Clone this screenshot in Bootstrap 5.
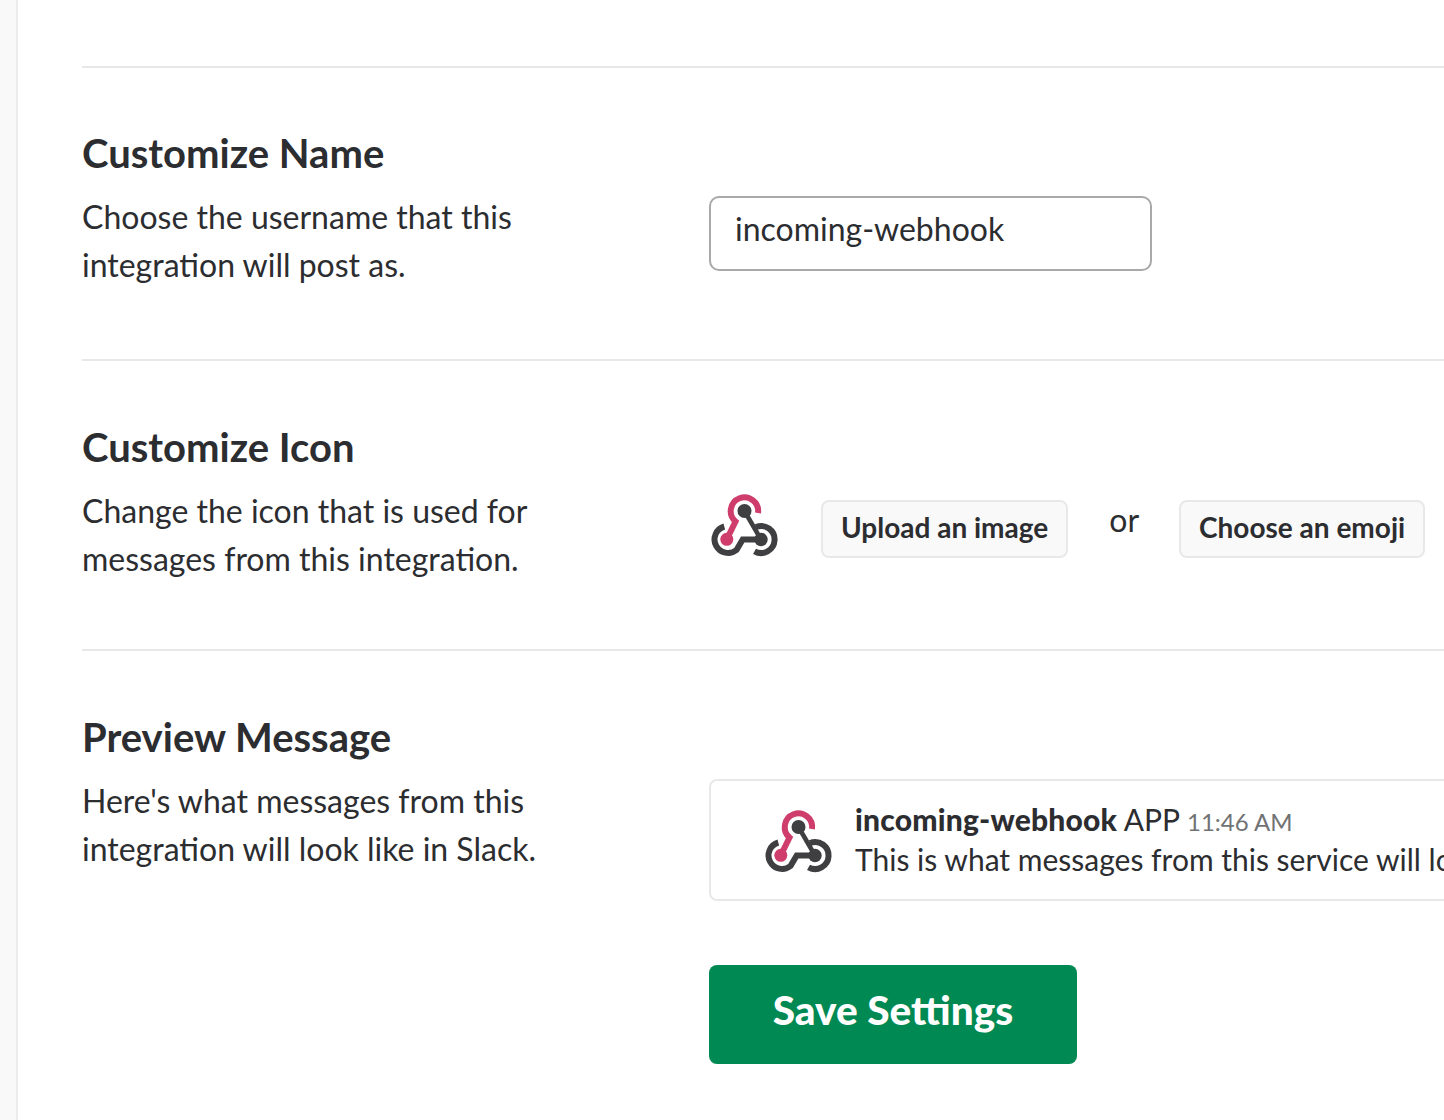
<!DOCTYPE html>
<html lang="en">
<head>
  <meta charset="UTF-8">
  <title>Incoming WebHooks</title>
  <link rel="stylesheet" href="https://cdn.jsdelivr.net/npm/bootstrap@5.3.3/dist/css/bootstrap.min.css">
  <style>
    html, body { height: 1120px; overflow: hidden; }
    body { background: #fff; color: #2c2d30; font-family: Lato, "Liberation Sans", sans-serif; }
    .side-strip { width: 18px; background: #f9f9f9; border-right: 2px solid #ececec; flex: none; }
    .settings-main { padding: 66px 0 0 64px; width: 1426px; flex: none; }
    .settings-row { border-top: 2px solid #e8e8e8; display: flex; }
    .row-one { height: 293px; padding-top: 59px; }
    .row-two { height: 290px; padding-top: 60px; }
    .row-three { padding-top: 60px; }
    .info-col { width: 627px; flex: none; }
    .info-col h3 { font-size: 40px; line-height: 52px; font-weight: 700; margin: 0 0 14px; }
    .info-col p { font-size: 32px; line-height: 48px; margin: 0; }
    .name-input { width: 443px; height: 75px; margin-top: 69px; border: 2px solid #a9a9ab; border-radius: 10px; font-size: 32px; padding: 0 24px 10px; color: #2c2d30; }
    .icon-line { margin-top: 79px; height: 58px; }
    .hook-icon { width: 74px; height: 70px; flex: none; }
    .icon-line .hook-icon { margin: 0 39px 8px -1px; }
    .ghost-btn { height: 58px; background: #f9f9f9; border: 2px solid #e8e8e8; border-radius: 8px; font-size: 28px; font-weight: 700; color: #2c2d30; padding: 0 18px 5px; white-space: nowrap; }
    .or-text { font-size: 32px; padding-bottom: 18px; margin: 0 40px 0 41px; }
    .preview-box { width: 900px; height: 122px; margin-top: 68px; border: 2px solid #e8e8e8; border-radius: 8px; padding: 18px 0 0 51px; white-space: nowrap; column-gap: 19px; }
    .preview-box .hook-icon { margin-top: 7px; }
    .preview-line { font-size: 30px; line-height: 40px; }
    .preview-name { font-weight: 900; letter-spacing: 0.2px; }
    .preview-time { font-size: 24px; line-height: 1; color: #717274; }
    .btn-save { width: 368px; height: 99px; margin-top: 64px; background: #008952; border: 0; border-radius: 8px; color: #fff; font-size: 40.5px; font-weight: 900; padding-bottom: 10px; }
  </style>
</head>
<body class="d-flex">
  <svg width="0" height="0" class="position-absolute">
    <symbol id="hook" viewBox="8 10 74 70">
      <g fill="none" stroke-width="6">
        <path d="M44.500 31L61 59.500" stroke="#3f3f41" stroke-width="4.500"/>
        <path d="M56 47A13.500 13.500 0 1 1 54.500 71.300" stroke="#3f3f41"/>
        <path d="M24.300 46.500A13.500 13.500 0 1 0 36.500 70L42.700 59.500H61" stroke="#3f3f41"/>
        <path d="M58 33A13.700 13.700 0 1 0 35.500 41.500L26.800 59.300" stroke="#cf3d6c"/>
      </g>
      <circle cx="44.500" cy="31" r="7" fill="#3f3f41"/>
      <circle cx="61" cy="59.500" r="6.700" fill="#3f3f41"/>
      <circle cx="26.800" cy="59.300" r="6.500" fill="#cf3d6c"/>
    </symbol>
  </svg>

  <div class="side-strip"></div>

  <div class="settings-main">
    <div class="settings-row row-one">
      <div class="info-col">
        <h3>Customize Name</h3>
        <p>Choose the username that this<br>integration will post as.</p>
      </div>
      <input type="text" class="name-input" value="incoming-webhook">
    </div>

    <div class="settings-row row-two">
      <div class="info-col">
        <h3>Customize Icon</h3>
        <p>Change the icon that is used for<br>messages from this integration.</p>
      </div>
      <div class="icon-line d-flex align-items-center">
        <svg class="hook-icon"><use href="#hook"/></svg>
        <button type="button" class="ghost-btn">Upload an image</button>
        <span class="or-text">or</span>
        <button type="button" class="ghost-btn">Choose an emoji</button>
      </div>
    </div>

    <div class="settings-row row-three">
      <div class="info-col">
        <h3>Preview Message</h3>
        <p>Here's what messages from this<br>integration will look like in Slack.</p>
      </div>
      <div>
        <div class="preview-box d-flex">
          <svg class="hook-icon"><use href="#hook"/></svg>
          <div>
            <div class="preview-line"><span class="preview-name">incoming-webhook</span> APP <span class="preview-time">11:46 AM</span></div>
            <div class="preview-line">This is what messages from this service will look like in Slack.</div>
          </div>
        </div>
        <button type="button" class="btn-save d-block">Save Settings</button>
      </div>
    </div>
  </div>

  <script src="https://cdn.jsdelivr.net/npm/bootstrap@5.3.3/dist/js/bootstrap.bundle.min.js"></script>
</body>
</html>
